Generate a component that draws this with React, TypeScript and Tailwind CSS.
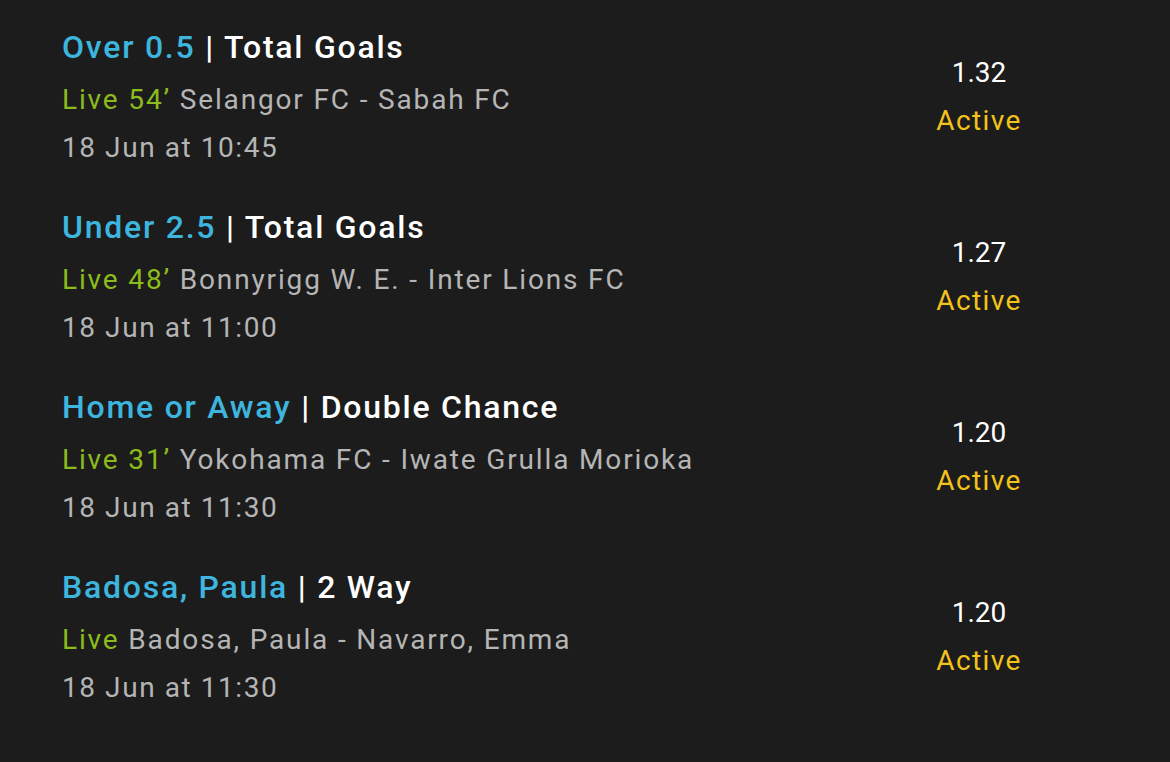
const bets = [
  { pick: "Over 0.5", market: "Total Goals", live: "Live 54’", match: "Selangor FC - Sabah FC", time: "18 Jun at 10:45", odds: "1.32" },
  { pick: "Under 2.5", market: "Total Goals", live: "Live 48’", match: "Bonnyrigg W. E. - Inter Lions FC", time: "18 Jun at 11:00", odds: "1.27" },
  { pick: "Home or Away", market: "Double Chance", live: "Live 31’", match: "Yokohama FC - Iwate Grulla Morioka", time: "18 Jun at 11:30", odds: "1.20" },
  { pick: "Badosa, Paula", market: "2 Way", live: "Live", match: "Badosa, Paula - Navarro, Emma", time: "18 Jun at 11:30", odds: "1.20" },
];

export default function App() {
  return (
    <div className="min-h-screen w-[1170px] h-[762px] bg-[#1c1c1c] pt-5 pl-[62px] pr-[106px] font-['Roboto',sans-serif] overflow-hidden">
      <div className="flex flex-col gap-[28px]">
        {bets.map((b, i) => (
          <div key={i} className="flex items-center justify-between">
            <div>
              <p className="text-[32px] leading-[54px] font-medium tracking-[0.055em]">
                <span className="text-[#3db5de]">{b.pick}</span>
                <span className="text-white"> | {b.market}</span>
              </p>
              <p className="mt-[2px] text-[28px] leading-[48px] tracking-[0.066em]">
                <span className="text-[#8cbb1c]">{b.live}</span>
                <span className="text-[#b5b5b5]"> {b.match}</span>
              </p>
              <p className="text-[28px] leading-[48px] tracking-[0.056em] text-[#b5b5b5]">{b.time}</p>
            </div>
            <div className="w-[170px] pt-[2px] text-center text-[28px] leading-[48px]">
              <p className="text-white">{b.odds}</p>
              <p className="text-[#f2c318] tracking-[0.05em]">Active</p>
            </div>
          </div>
        ))}
      </div>
    </div>
  );
}
